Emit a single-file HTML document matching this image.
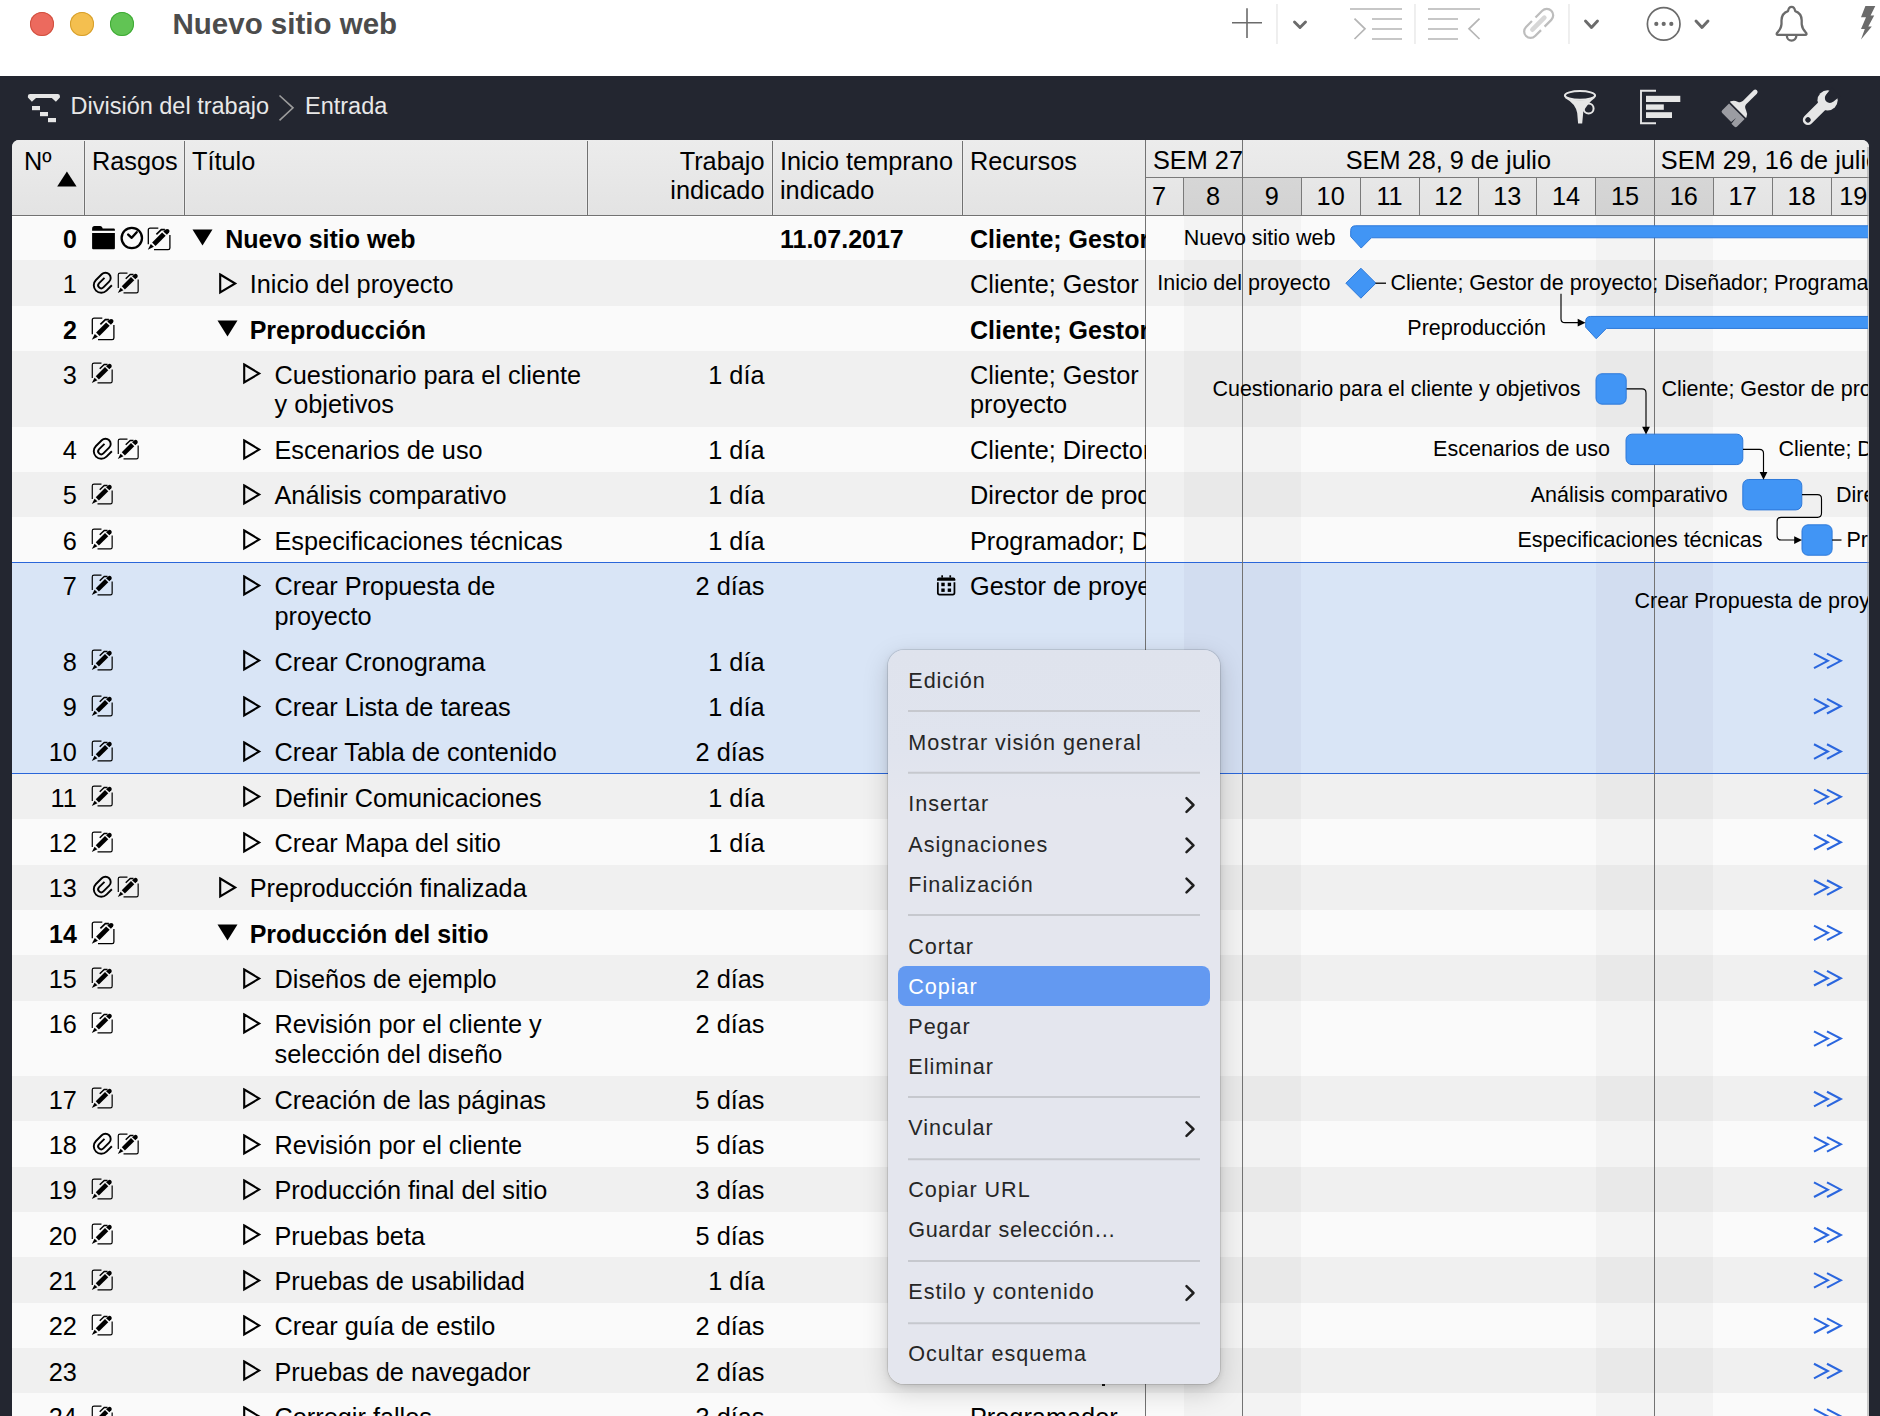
<!DOCTYPE html><html><head><meta charset="utf-8"><title>Nuevo sitio web</title><style>

*{box-sizing:border-box}
html,body{margin:0;padding:0}
body{width:1880px;height:1416px;overflow:hidden;position:relative;background:#232630;font-family:"Liberation Sans",sans-serif;}
.t{position:absolute;white-space:nowrap;}
.ic{position:absolute;overflow:visible}
.abs{position:absolute}

</style></head><body>
<div class="abs" style="left:0;top:0;width:1880px;height:76px;background:#ffffff"></div>
<div class="abs" style="left:30px;top:12px;width:24px;height:24px;border-radius:50%;background:#ec6a5e;box-shadow:inset 0 0 0 1px #d0503f"></div>
<div class="abs" style="left:70px;top:12px;width:24px;height:24px;border-radius:50%;background:#f4bf4f;box-shadow:inset 0 0 0 1px #d69f2c"></div>
<div class="abs" style="left:110px;top:12px;width:24px;height:24px;border-radius:50%;background:#61c454;box-shadow:inset 0 0 0 1px #3faa35"></div>
<div class="t" style="top:5.87px;font-size:29.5px;line-height:35.4px;color:#4c4c4c;font-weight:bold;left:172.50px;">Nuevo sitio web</div>
<svg class="abs" style="left:0;top:0" width="1880" height="76">
<path d="M1232 22.8 H1262 M1247 8.2 V38" stroke="#6b6b6b" stroke-width="1.6" fill="none"/>
<path d="M1277 4 V44 M1415 4 V44 M1569 4 V44" stroke="#e6e6e6" stroke-width="1.3"/>
<path d="M1294.5 22 L1300 27.5 L1305.5 22" stroke="#6b6b6b" stroke-width="2.9" fill="none" stroke-linecap="round" stroke-linejoin="round"/>
<path d="M1585.5 21 L1591.5 27.5 L1597.5 21" stroke="#6b6b6b" stroke-width="2.9" fill="none" stroke-linecap="round" stroke-linejoin="round"/>
<path d="M1696 21 L1702 27.5 L1708 21" stroke="#6b6b6b" stroke-width="2.9" fill="none" stroke-linecap="round" stroke-linejoin="round"/>
<path d="M1350 9 H1402 M1372 19 H1402 M1372 29 H1402 M1372 39 H1402 M1354.5 18.6 L1365 28.8 L1354.5 39" stroke="#b5b5b5" stroke-width="1.7" fill="none"/>
<path d="M1428 9 H1480 M1428 19 H1458 M1428 29 H1458 M1428 39 H1458 M1479.5 18.6 L1469 28.8 L1479.5 39" stroke="#b5b5b5" stroke-width="1.7" fill="none"/>
<g transform="translate(1538.3,23.8) rotate(-45) scale(1.07)"><path d="M2.3 -6 H11.2 A6 6 0 0 1 11.2 6 H2.3 M-2.4 -6 H-10.2 A6 6 0 0 0 -10.2 6 H-2.4" fill="none" stroke="#bdbdbd" stroke-width="2.1"/><path d="M-7.8 0 H8" stroke="#d7d7d7" stroke-width="4.3" stroke-linecap="round"/></g>
<circle cx="1663.7" cy="23.9" r="16.3" fill="none" stroke="#6b6b6b" stroke-width="1.7"/>
<circle cx="1656.3" cy="23.9" r="2.1" fill="#6b6b6b"/><circle cx="1663.7" cy="23.9" r="2.1" fill="#6b6b6b"/><circle cx="1671.3" cy="23.9" r="2.1" fill="#6b6b6b"/>
<path transform="translate(0,0.7)" d="M1778 34.2 H1805.2 Q1807.3 34.2 1806 32 Q1802 28 1801.7 23.5 V19.5 Q1801.5 12.5 1795.2 10.4 Q1794.4 6.2 1791.6 6.2 Q1788.8 6.2 1788 10.4 Q1781.7 12.5 1781.5 19.5 V23.5 Q1781.2 28 1777.2 32 Q1775.9 34.2 1778 34.2 Z" fill="none" stroke="#6b6b6b" stroke-width="2.3" stroke-linejoin="round"/>
<path transform="translate(0,0.7)" d="M1786.9 35.2 A4.7 4.7 0 0 0 1796.3 35.2" fill="none" stroke="#6b6b6b" stroke-width="2.3"/>
<path d="M1865.4 6.1 H1875.3 L1870.6 15.5 H1874.2 L1868.3 26.6 H1871.8 L1861 39.4 L1864.8 28.9 H1861 L1866 17.2 H1861 Z" fill="#6b6b6b"/>
</svg>
<svg class="abs" style="left:0;top:76px" width="1880" height="64">
<path d="M27.9 20.1 Q27.9 17.9 30.1 17.9 H57.7 Q59.9 17.9 59.9 20.1 V21.6 L55.9 25.8 L51.8 21.9 H36 L31.9 25.8 L27.9 21.6 Z" fill="#e6e6e6"/>
<rect x="32" y="30" width="8" height="4.2" fill="#e6e6e6"/><rect x="40" y="36" width="8" height="4.2" fill="#e6e6e6"/><rect x="48" y="42" width="8" height="4.2" fill="#e6e6e6"/>
<path d="M279.5 19.5 L293 31.8 L279.5 44.3" stroke="#9c9c9c" stroke-width="1.6" fill="none"/>
<g transform="translate(0,-76)">
<circle cx="1588.6" cy="108.4" r="5" fill="#232630" stroke="#e6e6e6" stroke-width="2"/>
<path d="M1564.8 96 A15.2 4.3 0 0 0 1595.2 96 L1594.5 98.2 Q1587.8 103 1583.3 111.8 L1582.2 123.6 H1578.1 L1577.2 113 Q1575.5 103.5 1565.3 98.2 Z" fill="#e6e6e6"/>
<ellipse cx="1580" cy="95.4" rx="15.1" ry="4.3" fill="#232630" stroke="#e6e6e6" stroke-width="2"/>
</g>
<path d="M1656 14.8 H1641 V47.2 H1656" fill="none" stroke="#e6e6e6" stroke-width="1.9"/>
<rect x="1646" y="19.8" width="34.3" height="6.2" fill="#e6e6e6"/><rect x="1646" y="28.4" width="17.8" height="5.4" fill="#e6e6e6"/><rect x="1646" y="36.2" width="26" height="5.8" fill="#e6e6e6"/>
<g transform="translate(1737,34) rotate(-45)">
<path d="M8 -2.2 H25.6 A2.3 2.3 0 0 1 25.6 2.5 H8 Z" fill="#e6e6e6"/>
<path d="M0.6 -10.2 Q0.6 -11 1.6 -10.6 Q5 -9 6.3 -5.5 Q7.5 -2.6 10 -2.2 V2.5 Q7.5 2.8 6.3 6.5 Q5 10.5 1.6 11.8 Q0.6 12.2 0.6 11.3 Z" fill="#e6e6e6"/>
<path d="M-1 -10.3 V11.8 H-11.6 Q-13.6 11.8 -13.6 9.8 V5.7 L-6.3 5 L-12.6 4.3 V-8.3 Q-12.6 -10.3 -10.6 -10.3 Z" fill="#9b9ca2"/>
</g>
<g transform="translate(1808,43.9) rotate(-45)">
<path d="M0 -5.2 H27 V5.2 H0 A5.2 5.2 0 0 1 0 -5.2 Z" fill="#e6e6e6"/>
<circle cx="27.7" cy="0" r="10.1" fill="#e6e6e6"/>
<circle cx="30.9" cy="0" r="5" fill="#232630"/>
<path d="M30.9 -5 L40 -6.2 V6.2 L30.9 5 Z" fill="#232630"/>
<circle cx="0" cy="0" r="2.7" fill="#232630"/>
</g>
</svg>
<div class="t" style="top:92.05px;font-size:23.5px;line-height:28.2px;color:#e8e8e8;left:70.50px;">División del trabajo</div>
<div class="t" style="top:92.05px;font-size:23.5px;line-height:28.2px;color:#e8e8e8;left:305.00px;">Entrada</div>
<div class="abs" style="left:12px;top:140px;width:1856.5px;height:1300px;background:#fafafa;border-radius:7px 7px 0 0;overflow:hidden">
</div>
<div class="abs" style="left:12px;top:140px;width:1856.5px;height:75px;background:linear-gradient(#ececec,#e3e3e3);border-radius:7px 7px 0 0"></div>
<div class="abs" style="left:12px;top:215.00px;width:1856.5px;height:45.33px;background:#fafafa"></div>
<div class="abs" style="left:1183.54px;top:215.00px;width:117.71px;height:45.33px;background:rgba(0,0,0,0.028)"></div>
<div class="abs" style="left:1595.54px;top:215.00px;width:117.71px;height:45.33px;background:rgba(0,0,0,0.028)"></div>
<div class="abs" style="left:12px;top:260.33px;width:1856.5px;height:45.33px;background:#f0f0f0"></div>
<div class="abs" style="left:1183.54px;top:260.33px;width:117.71px;height:45.33px;background:rgba(0,0,0,0.028)"></div>
<div class="abs" style="left:1595.54px;top:260.33px;width:117.71px;height:45.33px;background:rgba(0,0,0,0.028)"></div>
<div class="abs" style="left:12px;top:305.67px;width:1856.5px;height:45.33px;background:#fafafa"></div>
<div class="abs" style="left:1183.54px;top:305.67px;width:117.71px;height:45.33px;background:rgba(0,0,0,0.028)"></div>
<div class="abs" style="left:1595.54px;top:305.67px;width:117.71px;height:45.33px;background:rgba(0,0,0,0.028)"></div>
<div class="abs" style="left:12px;top:351.00px;width:1856.5px;height:75.50px;background:#f0f0f0"></div>
<div class="abs" style="left:1183.54px;top:351.00px;width:117.71px;height:75.50px;background:rgba(0,0,0,0.028)"></div>
<div class="abs" style="left:1595.54px;top:351.00px;width:117.71px;height:75.50px;background:rgba(0,0,0,0.028)"></div>
<div class="abs" style="left:12px;top:426.50px;width:1856.5px;height:45.33px;background:#fafafa"></div>
<div class="abs" style="left:1183.54px;top:426.50px;width:117.71px;height:45.33px;background:rgba(0,0,0,0.028)"></div>
<div class="abs" style="left:1595.54px;top:426.50px;width:117.71px;height:45.33px;background:rgba(0,0,0,0.028)"></div>
<div class="abs" style="left:12px;top:471.83px;width:1856.5px;height:45.33px;background:#f0f0f0"></div>
<div class="abs" style="left:1183.54px;top:471.83px;width:117.71px;height:45.33px;background:rgba(0,0,0,0.028)"></div>
<div class="abs" style="left:1595.54px;top:471.83px;width:117.71px;height:45.33px;background:rgba(0,0,0,0.028)"></div>
<div class="abs" style="left:12px;top:517.16px;width:1856.5px;height:45.33px;background:#fafafa"></div>
<div class="abs" style="left:1183.54px;top:517.16px;width:117.71px;height:45.33px;background:rgba(0,0,0,0.028)"></div>
<div class="abs" style="left:1595.54px;top:517.16px;width:117.71px;height:45.33px;background:rgba(0,0,0,0.028)"></div>
<div class="abs" style="left:12px;top:562.50px;width:1856.5px;height:75.50px;background:#d9e5f6"></div>
<div class="abs" style="left:1183.54px;top:562.50px;width:117.71px;height:75.50px;background:rgba(20,40,80,0.035)"></div>
<div class="abs" style="left:1595.54px;top:562.50px;width:117.71px;height:75.50px;background:rgba(20,40,80,0.035)"></div>
<div class="abs" style="left:12px;top:638.00px;width:1856.5px;height:45.33px;background:#d9e5f6"></div>
<div class="abs" style="left:1183.54px;top:638.00px;width:117.71px;height:45.33px;background:rgba(20,40,80,0.035)"></div>
<div class="abs" style="left:1595.54px;top:638.00px;width:117.71px;height:45.33px;background:rgba(20,40,80,0.035)"></div>
<div class="abs" style="left:12px;top:683.33px;width:1856.5px;height:45.33px;background:#d9e5f6"></div>
<div class="abs" style="left:1183.54px;top:683.33px;width:117.71px;height:45.33px;background:rgba(20,40,80,0.035)"></div>
<div class="abs" style="left:1595.54px;top:683.33px;width:117.71px;height:45.33px;background:rgba(20,40,80,0.035)"></div>
<div class="abs" style="left:12px;top:728.66px;width:1856.5px;height:45.33px;background:#d9e5f6"></div>
<div class="abs" style="left:1183.54px;top:728.66px;width:117.71px;height:45.33px;background:rgba(20,40,80,0.035)"></div>
<div class="abs" style="left:1595.54px;top:728.66px;width:117.71px;height:45.33px;background:rgba(20,40,80,0.035)"></div>
<div class="abs" style="left:12px;top:774.00px;width:1856.5px;height:45.33px;background:#f0f0f0"></div>
<div class="abs" style="left:1183.54px;top:774.00px;width:117.71px;height:45.33px;background:rgba(0,0,0,0.028)"></div>
<div class="abs" style="left:1595.54px;top:774.00px;width:117.71px;height:45.33px;background:rgba(0,0,0,0.028)"></div>
<div class="abs" style="left:12px;top:819.33px;width:1856.5px;height:45.33px;background:#fafafa"></div>
<div class="abs" style="left:1183.54px;top:819.33px;width:117.71px;height:45.33px;background:rgba(0,0,0,0.028)"></div>
<div class="abs" style="left:1595.54px;top:819.33px;width:117.71px;height:45.33px;background:rgba(0,0,0,0.028)"></div>
<div class="abs" style="left:12px;top:864.66px;width:1856.5px;height:45.33px;background:#f0f0f0"></div>
<div class="abs" style="left:1183.54px;top:864.66px;width:117.71px;height:45.33px;background:rgba(0,0,0,0.028)"></div>
<div class="abs" style="left:1595.54px;top:864.66px;width:117.71px;height:45.33px;background:rgba(0,0,0,0.028)"></div>
<div class="abs" style="left:12px;top:910.00px;width:1856.5px;height:45.33px;background:#fafafa"></div>
<div class="abs" style="left:1183.54px;top:910.00px;width:117.71px;height:45.33px;background:rgba(0,0,0,0.028)"></div>
<div class="abs" style="left:1595.54px;top:910.00px;width:117.71px;height:45.33px;background:rgba(0,0,0,0.028)"></div>
<div class="abs" style="left:12px;top:955.33px;width:1856.5px;height:45.33px;background:#f0f0f0"></div>
<div class="abs" style="left:1183.54px;top:955.33px;width:117.71px;height:45.33px;background:rgba(0,0,0,0.028)"></div>
<div class="abs" style="left:1595.54px;top:955.33px;width:117.71px;height:45.33px;background:rgba(0,0,0,0.028)"></div>
<div class="abs" style="left:12px;top:1000.66px;width:1856.5px;height:75.50px;background:#fafafa"></div>
<div class="abs" style="left:1183.54px;top:1000.66px;width:117.71px;height:75.50px;background:rgba(0,0,0,0.028)"></div>
<div class="abs" style="left:1595.54px;top:1000.66px;width:117.71px;height:75.50px;background:rgba(0,0,0,0.028)"></div>
<div class="abs" style="left:12px;top:1076.16px;width:1856.5px;height:45.33px;background:#f0f0f0"></div>
<div class="abs" style="left:1183.54px;top:1076.16px;width:117.71px;height:45.33px;background:rgba(0,0,0,0.028)"></div>
<div class="abs" style="left:1595.54px;top:1076.16px;width:117.71px;height:45.33px;background:rgba(0,0,0,0.028)"></div>
<div class="abs" style="left:12px;top:1121.49px;width:1856.5px;height:45.33px;background:#fafafa"></div>
<div class="abs" style="left:1183.54px;top:1121.49px;width:117.71px;height:45.33px;background:rgba(0,0,0,0.028)"></div>
<div class="abs" style="left:1595.54px;top:1121.49px;width:117.71px;height:45.33px;background:rgba(0,0,0,0.028)"></div>
<div class="abs" style="left:12px;top:1166.83px;width:1856.5px;height:45.33px;background:#f0f0f0"></div>
<div class="abs" style="left:1183.54px;top:1166.83px;width:117.71px;height:45.33px;background:rgba(0,0,0,0.028)"></div>
<div class="abs" style="left:1595.54px;top:1166.83px;width:117.71px;height:45.33px;background:rgba(0,0,0,0.028)"></div>
<div class="abs" style="left:12px;top:1212.16px;width:1856.5px;height:45.33px;background:#fafafa"></div>
<div class="abs" style="left:1183.54px;top:1212.16px;width:117.71px;height:45.33px;background:rgba(0,0,0,0.028)"></div>
<div class="abs" style="left:1595.54px;top:1212.16px;width:117.71px;height:45.33px;background:rgba(0,0,0,0.028)"></div>
<div class="abs" style="left:12px;top:1257.49px;width:1856.5px;height:45.33px;background:#f0f0f0"></div>
<div class="abs" style="left:1183.54px;top:1257.49px;width:117.71px;height:45.33px;background:rgba(0,0,0,0.028)"></div>
<div class="abs" style="left:1595.54px;top:1257.49px;width:117.71px;height:45.33px;background:rgba(0,0,0,0.028)"></div>
<div class="abs" style="left:12px;top:1302.83px;width:1856.5px;height:45.33px;background:#fafafa"></div>
<div class="abs" style="left:1183.54px;top:1302.83px;width:117.71px;height:45.33px;background:rgba(0,0,0,0.028)"></div>
<div class="abs" style="left:1595.54px;top:1302.83px;width:117.71px;height:45.33px;background:rgba(0,0,0,0.028)"></div>
<div class="abs" style="left:12px;top:1348.16px;width:1856.5px;height:45.33px;background:#f0f0f0"></div>
<div class="abs" style="left:1183.54px;top:1348.16px;width:117.71px;height:45.33px;background:rgba(0,0,0,0.028)"></div>
<div class="abs" style="left:1595.54px;top:1348.16px;width:117.71px;height:45.33px;background:rgba(0,0,0,0.028)"></div>
<div class="abs" style="left:12px;top:1393.49px;width:1856.5px;height:45.33px;background:#fafafa"></div>
<div class="abs" style="left:1183.54px;top:1393.49px;width:117.71px;height:45.33px;background:rgba(0,0,0,0.028)"></div>
<div class="abs" style="left:1595.54px;top:1393.49px;width:117.71px;height:45.33px;background:rgba(0,0,0,0.028)"></div>
<div class="abs" style="left:1183.54px;top:177.5px;width:117.71px;height:37.5px;background:linear-gradient(#d6d6d6,#d2d2d2)"></div>
<div class="abs" style="left:1595.54px;top:177.5px;width:117.71px;height:37.5px;background:linear-gradient(#d6d6d6,#d2d2d2)"></div>
<div class="abs" style="left:12px;top:562px;width:1856.5px;height:1px;background:#2a66d9"></div>
<div class="abs" style="left:12px;top:773px;width:1856.5px;height:1px;background:#2a66d9"></div>
<svg class="abs" style="left:0;top:0" width="1880" height="1416">
<path d="M84.5 141 V215" stroke="#717171" stroke-width="1"/>
<path d="M83.5 141 V215 M85.5 141 V215" stroke="#efefef" stroke-width="1" opacity="0.7"/>
<path d="M184.5 141 V215" stroke="#717171" stroke-width="1"/>
<path d="M183.5 141 V215 M185.5 141 V215" stroke="#efefef" stroke-width="1" opacity="0.7"/>
<path d="M587.5 141 V215" stroke="#717171" stroke-width="1"/>
<path d="M586.5 141 V215 M588.5 141 V215" stroke="#efefef" stroke-width="1" opacity="0.7"/>
<path d="M772.5 141 V215" stroke="#717171" stroke-width="1"/>
<path d="M771.5 141 V215 M773.5 141 V215" stroke="#efefef" stroke-width="1" opacity="0.7"/>
<path d="M962.5 141 V215" stroke="#717171" stroke-width="1"/>
<path d="M961.5 141 V215 M963.5 141 V215" stroke="#efefef" stroke-width="1" opacity="0.7"/>
<path d="M12 215.5 H1868.5" stroke="#727272" stroke-width="1"/>
<path d="M12 216.5 H1146" stroke="#ffffff" stroke-width="1"/>
<path d="M1145.5 140 V1416" stroke="#737373" stroke-width="1"/>
<path d="M1146 177.5 H1868.5" stroke="#7a7a7a" stroke-width="1"/>
<path d="M1183.5 178 V215" stroke="#7a7a7a" stroke-width="1"/>
<path d="M1242.5 140 V1416" stroke="#737373" stroke-width="1"/>
<path d="M1301.5 178 V215" stroke="#7a7a7a" stroke-width="1"/>
<path d="M1360.5 178 V215" stroke="#7a7a7a" stroke-width="1"/>
<path d="M1419.5 178 V215" stroke="#7a7a7a" stroke-width="1"/>
<path d="M1478.5 178 V215" stroke="#7a7a7a" stroke-width="1"/>
<path d="M1536.5 178 V215" stroke="#7a7a7a" stroke-width="1"/>
<path d="M1595.5 178 V215" stroke="#7a7a7a" stroke-width="1"/>
<path d="M1654.5 140 V1416" stroke="#737373" stroke-width="1"/>
<path d="M1713.5 178 V215" stroke="#7a7a7a" stroke-width="1"/>
<path d="M1772.5 178 V215" stroke="#7a7a7a" stroke-width="1"/>
<path d="M1831.5 178 V215" stroke="#7a7a7a" stroke-width="1"/>
<path d="M1868 147 V1416" stroke="#9a9a9a" stroke-width="1"/>
</svg>
<div class="t" style="top:145.95px;font-size:25.3px;line-height:30.36px;color:#000;left:24.00px;">Nº</div>
<svg class="ic" style="left:57px;top:170.5px" width="20" height="16"><path d="M0.2 15.6 H19.6 L9.9 0.4 Z" fill="#000"/></svg>
<div class="t" style="top:145.95px;font-size:25.3px;line-height:30.36px;color:#000;left:92.00px;">Rasgos</div>
<div class="t" style="top:145.95px;font-size:25.3px;line-height:30.36px;color:#000;left:192.00px;">Título</div>
<div class="t" style="top:145.95px;font-size:25.3px;line-height:30.36px;color:#000;right:1115.50px;text-align:right;">Trabajo</div>
<div class="t" style="top:174.65px;font-size:25.3px;line-height:30.36px;color:#000;right:1115.50px;text-align:right;">indicado</div>
<div class="t" style="top:145.95px;font-size:25.3px;line-height:30.36px;color:#000;left:780.00px;">Inicio temprano</div>
<div class="t" style="top:174.65px;font-size:25.3px;line-height:30.36px;color:#000;left:780.00px;">indicado</div>
<div class="t" style="top:145.95px;font-size:25.3px;line-height:30.36px;color:#000;left:970.00px;">Recursos</div>
<div class="t" style="top:144.95px;font-size:25.3px;line-height:30.36px;color:#000;left:1153.00px;">SEM 27</div>
<div class="t" style="top:144.95px;font-size:25.3px;line-height:30.36px;color:#000;left:1248.40px;width:400px;text-align:center;">SEM 28, 9 de julio</div>
<div class="abs" style="left:1146px;top:140px;width:722.5px;height:75px;overflow:hidden">
</div>
<div class="abs" style="left:1655px;top:140px;width:213px;height:75px;overflow:hidden">
<div class="t" style="top:4.95px;font-size:25.3px;line-height:30.36px;color:#000;left:5.80px;">SEM 29, 16 de julio</div>
</div>
<div class="t" style="top:181.35px;font-size:25.3px;line-height:30.36px;color:#000;left:1182.97px;width:60px;text-align:center;">8</div>
<div class="t" style="top:181.35px;font-size:25.3px;line-height:30.36px;color:#000;left:1241.83px;width:60px;text-align:center;">9</div>
<div class="t" style="top:181.35px;font-size:25.3px;line-height:30.36px;color:#000;left:1300.69px;width:60px;text-align:center;">10</div>
<div class="t" style="top:181.35px;font-size:25.3px;line-height:30.36px;color:#000;left:1359.54px;width:60px;text-align:center;">11</div>
<div class="t" style="top:181.35px;font-size:25.3px;line-height:30.36px;color:#000;left:1418.40px;width:60px;text-align:center;">12</div>
<div class="t" style="top:181.35px;font-size:25.3px;line-height:30.36px;color:#000;left:1477.26px;width:60px;text-align:center;">13</div>
<div class="t" style="top:181.35px;font-size:25.3px;line-height:30.36px;color:#000;left:1536.11px;width:60px;text-align:center;">14</div>
<div class="t" style="top:181.35px;font-size:25.3px;line-height:30.36px;color:#000;left:1594.97px;width:60px;text-align:center;">15</div>
<div class="t" style="top:181.35px;font-size:25.3px;line-height:30.36px;color:#000;left:1653.83px;width:60px;text-align:center;">16</div>
<div class="t" style="top:181.35px;font-size:25.3px;line-height:30.36px;color:#000;left:1712.68px;width:60px;text-align:center;">17</div>
<div class="t" style="top:181.35px;font-size:25.3px;line-height:30.36px;color:#000;left:1771.54px;width:60px;text-align:center;">18</div>
<div class="t" style="top:181.35px;font-size:25.3px;line-height:30.36px;color:#000;left:1152.00px;">7</div>
<div class="abs" style="left:1832px;top:177px;width:36.5px;height:38px;overflow:hidden">
<div class="t" style="top:4.35px;font-size:25.3px;line-height:30.36px;color:#000;left:7.20px;">19</div>
</div>
<div class="t" style="top:223.93px;font-size:25.0px;line-height:30.0px;color:#000;font-weight:bold;right:1803.20px;text-align:right;">0</div>
<svg class="ic" style="left:92px;top:225.57px" width="24" height="24" viewBox="0 0 24 24"><path d="M0.1 2.9 Q0.1 0.1 2.6 0.1 H8.3 Q9.8 0.1 10.3 1.6 L10.7 2.5 H21.8 Q22.9 2.5 22.9 3.6 V4.8 H0.1 Z" fill="#000"/><path d="M0.1 7 H22.9 V22.3 Q22.9 23.3 21.9 23.3 H1.1 Q0.1 23.3 0.1 22.3 Z" fill="#000"/></svg>
<svg class="ic" style="left:119.5px;top:225.87px" width="24" height="24" viewBox="0 0 24 24"><circle cx="11.8" cy="12" r="10.2" fill="none" stroke="#000" stroke-width="2.3"/><path d="M8.2 8.6 L11.7 11.8 L16.7 6.2" fill="none" stroke="#000" stroke-width="2.4" stroke-linecap="round" stroke-linejoin="round"/></svg>
<svg class="ic" style="left:148.4px;top:227.50px" width="24.00" height="25.00" viewBox="0 0 24 25"><path d="M0.3 16.2 V2 Q0.3 0.1 2.2 0.1 H10.3" fill="none" stroke="#000" stroke-width="1.3"/><path d="M6 21.7 H20.1 Q21.9 21.7 21.9 19.9 V7" fill="none" stroke="#000" stroke-width="1.3"/><path d="M4.1 14.5 L14.1 4.4 L17.7 7.8 L7.5 17.9 Z" fill="#000"/><path d="M-0.2 21.7 L2.8 15.9 L5.9 18.8 Z" fill="#000"/><path d="M15.3 3.6 L17.5 1.5 Q19.2 0.3 20.8 1.6 Q22.2 3.1 21 4.6 L18.9 6.8 Z" fill="#000"/><path d="M8.4 6.3 L13.3 1.6 L16.9 1.6" fill="none" stroke="#000" stroke-width="1.6"/></svg>
<svg class="ic" style="left:192px;top:229.17px" width="21" height="16.5"><path d="M0.5 0.5 H20.5 L10.5 16.5 Z" fill="#000"/></svg>
<div class="t" style="top:223.93px;font-size:25.0px;line-height:30.0px;color:#000;font-weight:bold;left:225.30px;">Nuevo sitio web</div>
<div class="t" style="top:223.93px;font-size:25.0px;line-height:30.0px;color:#000;font-weight:bold;left:780.00px;">11.07.2017</div>
<div class="abs" style="left:962.5px;top:215.00px;width:183px;height:45.33px;overflow:hidden">
<div class="t" style="top:8.93px;font-size:25.0px;line-height:30.0px;color:#000;font-weight:bold;left:7.50px;">Cliente; Gestor de proyecto; Diseñador</div>
</div>
<div class="t" style="top:268.98px;font-size:25.3px;line-height:30.36px;color:#000;right:1803.20px;text-align:right;">1</div>
<svg class="ic" style="left:90px;top:267.70px" width="28" height="28" viewBox="0 0 28 28"><g transform="rotate(-45)"><path d="M3.25 27.65 H-4.3 A7.46 7.46 0 0 1 -4.3 12.73 H3.9 A5.23 5.23 0 0 1 3.9 23.19 H-4.3 A3 3 0 0 1 -4.3 17.18 H3.3" fill="none" stroke="#000" stroke-width="1.9"/></g></svg>
<svg class="ic" style="left:118px;top:272.60px" width="22.08" height="23.00" viewBox="0 0 24 25"><path d="M0.3 16.2 V2 Q0.3 0.1 2.2 0.1 H10.3" fill="none" stroke="#000" stroke-width="1.3"/><path d="M6 21.7 H20.1 Q21.9 21.7 21.9 19.9 V7" fill="none" stroke="#000" stroke-width="1.3"/><path d="M4.1 14.5 L14.1 4.4 L17.7 7.8 L7.5 17.9 Z" fill="#000"/><path d="M-0.2 21.7 L2.8 15.9 L5.9 18.8 Z" fill="#000"/><path d="M15.3 3.6 L17.5 1.5 Q19.2 0.3 20.8 1.6 Q22.2 3.1 21 4.6 L18.9 6.8 Z" fill="#000"/><path d="M8.4 6.3 L13.3 1.6 L16.9 1.6" fill="none" stroke="#000" stroke-width="1.6"/></svg>
<svg class="ic" style="left:218.5px;top:272.50px" width="18" height="21"><path d="M1.2 1.5 L16.2 10.5 L1.2 19.5 Z" fill="none" stroke="#000" stroke-width="2.1" stroke-linejoin="miter"/></svg>
<div class="t" style="top:268.98px;font-size:25.3px;line-height:30.36px;color:#000;left:249.70px;">Inicio del proyecto</div>
<div class="abs" style="left:962.5px;top:260.33px;width:183px;height:45.33px;overflow:hidden">
<div class="t" style="top:8.65px;font-size:25.3px;line-height:30.36px;color:#000;left:7.50px;">Cliente; Gestor de proyecto</div>
</div>
<div class="t" style="top:314.60px;font-size:25.0px;line-height:30.0px;color:#000;font-weight:bold;right:1803.20px;text-align:right;">2</div>
<svg class="ic" style="left:92px;top:318.16px" width="24.00" height="25.00" viewBox="0 0 24 25"><path d="M0.3 16.2 V2 Q0.3 0.1 2.2 0.1 H10.3" fill="none" stroke="#000" stroke-width="1.3"/><path d="M6 21.7 H20.1 Q21.9 21.7 21.9 19.9 V7" fill="none" stroke="#000" stroke-width="1.3"/><path d="M4.1 14.5 L14.1 4.4 L17.7 7.8 L7.5 17.9 Z" fill="#000"/><path d="M-0.2 21.7 L2.8 15.9 L5.9 18.8 Z" fill="#000"/><path d="M15.3 3.6 L17.5 1.5 Q19.2 0.3 20.8 1.6 Q22.2 3.1 21 4.6 L18.9 6.8 Z" fill="#000"/><path d="M8.4 6.3 L13.3 1.6 L16.9 1.6" fill="none" stroke="#000" stroke-width="1.6"/></svg>
<svg class="ic" style="left:217px;top:319.83px" width="21" height="16.5"><path d="M0.5 0.5 H20.5 L10.5 16.5 Z" fill="#000"/></svg>
<div class="t" style="top:314.60px;font-size:25.0px;line-height:30.0px;color:#000;font-weight:bold;left:249.70px;">Preproducción</div>
<div class="abs" style="left:962.5px;top:305.67px;width:183px;height:45.33px;overflow:hidden">
<div class="t" style="top:8.93px;font-size:25.0px;line-height:30.0px;color:#000;font-weight:bold;left:7.50px;">Cliente; Gestor de proyecto</div>
</div>
<div class="t" style="top:359.65px;font-size:25.3px;line-height:30.36px;color:#000;right:1803.20px;text-align:right;">3</div>
<svg class="ic" style="left:92px;top:363.27px" width="22.08" height="23.00" viewBox="0 0 24 25"><path d="M0.3 16.2 V2 Q0.3 0.1 2.2 0.1 H10.3" fill="none" stroke="#000" stroke-width="1.3"/><path d="M6 21.7 H20.1 Q21.9 21.7 21.9 19.9 V7" fill="none" stroke="#000" stroke-width="1.3"/><path d="M4.1 14.5 L14.1 4.4 L17.7 7.8 L7.5 17.9 Z" fill="#000"/><path d="M-0.2 21.7 L2.8 15.9 L5.9 18.8 Z" fill="#000"/><path d="M15.3 3.6 L17.5 1.5 Q19.2 0.3 20.8 1.6 Q22.2 3.1 21 4.6 L18.9 6.8 Z" fill="#000"/><path d="M8.4 6.3 L13.3 1.6 L16.9 1.6" fill="none" stroke="#000" stroke-width="1.6"/></svg>
<svg class="ic" style="left:243.3px;top:363.17px" width="18" height="21"><path d="M1.2 1.5 L16.2 10.5 L1.2 19.5 Z" fill="none" stroke="#000" stroke-width="2.1" stroke-linejoin="miter"/></svg>
<div class="t" style="top:359.65px;font-size:25.3px;line-height:30.36px;color:#000;left:274.50px;">Cuestionario para el cliente</div>
<div class="t" style="top:389.25px;font-size:25.3px;line-height:30.36px;color:#000;left:274.50px;">y objetivos</div>
<div class="t" style="top:359.65px;font-size:25.3px;line-height:30.36px;color:#000;right:1115.50px;text-align:right;">1 día</div>
<div class="abs" style="left:962.5px;top:351.00px;width:183px;height:75.50px;overflow:hidden">
<div class="t" style="top:8.65px;font-size:25.3px;line-height:30.36px;color:#000;left:7.50px;">Cliente; Gestor de</div>
<div class="t" style="top:38.25px;font-size:25.3px;line-height:30.36px;color:#000;left:7.50px;">proyecto</div>
</div>
<div class="t" style="top:435.15px;font-size:25.3px;line-height:30.36px;color:#000;right:1803.20px;text-align:right;">4</div>
<svg class="ic" style="left:90px;top:433.87px" width="28" height="28" viewBox="0 0 28 28"><g transform="rotate(-45)"><path d="M3.25 27.65 H-4.3 A7.46 7.46 0 0 1 -4.3 12.73 H3.9 A5.23 5.23 0 0 1 3.9 23.19 H-4.3 A3 3 0 0 1 -4.3 17.18 H3.3" fill="none" stroke="#000" stroke-width="1.9"/></g></svg>
<svg class="ic" style="left:118px;top:438.77px" width="22.08" height="23.00" viewBox="0 0 24 25"><path d="M0.3 16.2 V2 Q0.3 0.1 2.2 0.1 H10.3" fill="none" stroke="#000" stroke-width="1.3"/><path d="M6 21.7 H20.1 Q21.9 21.7 21.9 19.9 V7" fill="none" stroke="#000" stroke-width="1.3"/><path d="M4.1 14.5 L14.1 4.4 L17.7 7.8 L7.5 17.9 Z" fill="#000"/><path d="M-0.2 21.7 L2.8 15.9 L5.9 18.8 Z" fill="#000"/><path d="M15.3 3.6 L17.5 1.5 Q19.2 0.3 20.8 1.6 Q22.2 3.1 21 4.6 L18.9 6.8 Z" fill="#000"/><path d="M8.4 6.3 L13.3 1.6 L16.9 1.6" fill="none" stroke="#000" stroke-width="1.6"/></svg>
<svg class="ic" style="left:243.3px;top:438.67px" width="18" height="21"><path d="M1.2 1.5 L16.2 10.5 L1.2 19.5 Z" fill="none" stroke="#000" stroke-width="2.1" stroke-linejoin="miter"/></svg>
<div class="t" style="top:435.15px;font-size:25.3px;line-height:30.36px;color:#000;left:274.50px;">Escenarios de uso</div>
<div class="t" style="top:435.15px;font-size:25.3px;line-height:30.36px;color:#000;right:1115.50px;text-align:right;">1 día</div>
<div class="abs" style="left:962.5px;top:426.50px;width:183px;height:45.33px;overflow:hidden">
<div class="t" style="top:8.65px;font-size:25.3px;line-height:30.36px;color:#000;left:7.50px;">Cliente; Director de producción</div>
</div>
<div class="t" style="top:480.48px;font-size:25.3px;line-height:30.36px;color:#000;right:1803.20px;text-align:right;">5</div>
<svg class="ic" style="left:92px;top:484.10px" width="22.08" height="23.00" viewBox="0 0 24 25"><path d="M0.3 16.2 V2 Q0.3 0.1 2.2 0.1 H10.3" fill="none" stroke="#000" stroke-width="1.3"/><path d="M6 21.7 H20.1 Q21.9 21.7 21.9 19.9 V7" fill="none" stroke="#000" stroke-width="1.3"/><path d="M4.1 14.5 L14.1 4.4 L17.7 7.8 L7.5 17.9 Z" fill="#000"/><path d="M-0.2 21.7 L2.8 15.9 L5.9 18.8 Z" fill="#000"/><path d="M15.3 3.6 L17.5 1.5 Q19.2 0.3 20.8 1.6 Q22.2 3.1 21 4.6 L18.9 6.8 Z" fill="#000"/><path d="M8.4 6.3 L13.3 1.6 L16.9 1.6" fill="none" stroke="#000" stroke-width="1.6"/></svg>
<svg class="ic" style="left:243.3px;top:484.00px" width="18" height="21"><path d="M1.2 1.5 L16.2 10.5 L1.2 19.5 Z" fill="none" stroke="#000" stroke-width="2.1" stroke-linejoin="miter"/></svg>
<div class="t" style="top:480.48px;font-size:25.3px;line-height:30.36px;color:#000;left:274.50px;">Análisis comparativo</div>
<div class="t" style="top:480.48px;font-size:25.3px;line-height:30.36px;color:#000;right:1115.50px;text-align:right;">1 día</div>
<div class="abs" style="left:962.5px;top:471.83px;width:183px;height:45.33px;overflow:hidden">
<div class="t" style="top:8.65px;font-size:25.3px;line-height:30.36px;color:#000;left:7.50px;">Director de producción</div>
</div>
<div class="t" style="top:525.81px;font-size:25.3px;line-height:30.36px;color:#000;right:1803.20px;text-align:right;">6</div>
<svg class="ic" style="left:92px;top:529.43px" width="22.08" height="23.00" viewBox="0 0 24 25"><path d="M0.3 16.2 V2 Q0.3 0.1 2.2 0.1 H10.3" fill="none" stroke="#000" stroke-width="1.3"/><path d="M6 21.7 H20.1 Q21.9 21.7 21.9 19.9 V7" fill="none" stroke="#000" stroke-width="1.3"/><path d="M4.1 14.5 L14.1 4.4 L17.7 7.8 L7.5 17.9 Z" fill="#000"/><path d="M-0.2 21.7 L2.8 15.9 L5.9 18.8 Z" fill="#000"/><path d="M15.3 3.6 L17.5 1.5 Q19.2 0.3 20.8 1.6 Q22.2 3.1 21 4.6 L18.9 6.8 Z" fill="#000"/><path d="M8.4 6.3 L13.3 1.6 L16.9 1.6" fill="none" stroke="#000" stroke-width="1.6"/></svg>
<svg class="ic" style="left:243.3px;top:529.33px" width="18" height="21"><path d="M1.2 1.5 L16.2 10.5 L1.2 19.5 Z" fill="none" stroke="#000" stroke-width="2.1" stroke-linejoin="miter"/></svg>
<div class="t" style="top:525.81px;font-size:25.3px;line-height:30.36px;color:#000;left:274.50px;">Especificaciones técnicas</div>
<div class="t" style="top:525.81px;font-size:25.3px;line-height:30.36px;color:#000;right:1115.50px;text-align:right;">1 día</div>
<div class="abs" style="left:962.5px;top:517.16px;width:183px;height:45.33px;overflow:hidden">
<div class="t" style="top:8.65px;font-size:25.3px;line-height:30.36px;color:#000;left:7.50px;">Programador; Diseñador</div>
</div>
<div class="t" style="top:571.15px;font-size:25.3px;line-height:30.36px;color:#000;right:1803.20px;text-align:right;">7</div>
<svg class="ic" style="left:92px;top:574.76px" width="22.08" height="23.00" viewBox="0 0 24 25"><path d="M0.3 16.2 V2 Q0.3 0.1 2.2 0.1 H10.3" fill="none" stroke="#000" stroke-width="1.3"/><path d="M6 21.7 H20.1 Q21.9 21.7 21.9 19.9 V7" fill="none" stroke="#000" stroke-width="1.3"/><path d="M4.1 14.5 L14.1 4.4 L17.7 7.8 L7.5 17.9 Z" fill="#000"/><path d="M-0.2 21.7 L2.8 15.9 L5.9 18.8 Z" fill="#000"/><path d="M15.3 3.6 L17.5 1.5 Q19.2 0.3 20.8 1.6 Q22.2 3.1 21 4.6 L18.9 6.8 Z" fill="#000"/><path d="M8.4 6.3 L13.3 1.6 L16.9 1.6" fill="none" stroke="#000" stroke-width="1.6"/></svg>
<svg class="ic" style="left:243.3px;top:574.66px" width="18" height="21"><path d="M1.2 1.5 L16.2 10.5 L1.2 19.5 Z" fill="none" stroke="#000" stroke-width="2.1" stroke-linejoin="miter"/></svg>
<div class="t" style="top:571.15px;font-size:25.3px;line-height:30.36px;color:#000;left:274.50px;">Crear Propuesta de</div>
<div class="t" style="top:600.75px;font-size:25.3px;line-height:30.36px;color:#000;left:274.50px;">proyecto</div>
<div class="t" style="top:571.15px;font-size:25.3px;line-height:30.36px;color:#000;right:1115.50px;text-align:right;">2 días</div>
<svg class="ic" style="left:937px;top:573.66px" width="19" height="23" viewBox="0 0 19 23"><path d="M0 5.2 Q0 3.4 1.8 3.4 H16.5 Q18.3 3.4 18.3 5.2 V6.65 H0 Z" fill="#000"/><rect x="4.3" y="1.3" width="1.7" height="2.3" fill="#000"/><rect x="12.4" y="1.3" width="1.7" height="2.3" fill="#000"/><path d="M0.85 8.3 V19 Q0.85 20.6 2.6 20.6 H15.7 Q17.45 20.6 17.45 19 V8.3" fill="none" stroke="#000" stroke-width="1.75"/><rect x="4.3" y="8.7" width="3.4" height="3.5" fill="#000"/><rect x="10.7" y="8.7" width="3.4" height="3.5" fill="#000"/><rect x="4.3" y="14.5" width="3.4" height="3.4" fill="#000"/><rect x="10.7" y="14.5" width="3.4" height="3.4" fill="#000"/></svg>
<div class="abs" style="left:962.5px;top:562.50px;width:183px;height:75.50px;overflow:hidden">
<div class="t" style="top:8.65px;font-size:25.3px;line-height:30.36px;color:#000;left:7.50px;">Gestor de proyecto</div>
</div>
<div class="t" style="top:646.65px;font-size:25.3px;line-height:30.36px;color:#000;right:1803.20px;text-align:right;">8</div>
<svg class="ic" style="left:92px;top:650.26px" width="22.08" height="23.00" viewBox="0 0 24 25"><path d="M0.3 16.2 V2 Q0.3 0.1 2.2 0.1 H10.3" fill="none" stroke="#000" stroke-width="1.3"/><path d="M6 21.7 H20.1 Q21.9 21.7 21.9 19.9 V7" fill="none" stroke="#000" stroke-width="1.3"/><path d="M4.1 14.5 L14.1 4.4 L17.7 7.8 L7.5 17.9 Z" fill="#000"/><path d="M-0.2 21.7 L2.8 15.9 L5.9 18.8 Z" fill="#000"/><path d="M15.3 3.6 L17.5 1.5 Q19.2 0.3 20.8 1.6 Q22.2 3.1 21 4.6 L18.9 6.8 Z" fill="#000"/><path d="M8.4 6.3 L13.3 1.6 L16.9 1.6" fill="none" stroke="#000" stroke-width="1.6"/></svg>
<svg class="ic" style="left:243.3px;top:650.16px" width="18" height="21"><path d="M1.2 1.5 L16.2 10.5 L1.2 19.5 Z" fill="none" stroke="#000" stroke-width="2.1" stroke-linejoin="miter"/></svg>
<div class="t" style="top:646.65px;font-size:25.3px;line-height:30.36px;color:#000;left:274.50px;">Crear Cronograma</div>
<div class="t" style="top:646.65px;font-size:25.3px;line-height:30.36px;color:#000;right:1115.50px;text-align:right;">1 día</div>
<div class="t" style="top:691.98px;font-size:25.3px;line-height:30.36px;color:#000;right:1803.20px;text-align:right;">9</div>
<svg class="ic" style="left:92px;top:695.60px" width="22.08" height="23.00" viewBox="0 0 24 25"><path d="M0.3 16.2 V2 Q0.3 0.1 2.2 0.1 H10.3" fill="none" stroke="#000" stroke-width="1.3"/><path d="M6 21.7 H20.1 Q21.9 21.7 21.9 19.9 V7" fill="none" stroke="#000" stroke-width="1.3"/><path d="M4.1 14.5 L14.1 4.4 L17.7 7.8 L7.5 17.9 Z" fill="#000"/><path d="M-0.2 21.7 L2.8 15.9 L5.9 18.8 Z" fill="#000"/><path d="M15.3 3.6 L17.5 1.5 Q19.2 0.3 20.8 1.6 Q22.2 3.1 21 4.6 L18.9 6.8 Z" fill="#000"/><path d="M8.4 6.3 L13.3 1.6 L16.9 1.6" fill="none" stroke="#000" stroke-width="1.6"/></svg>
<svg class="ic" style="left:243.3px;top:695.50px" width="18" height="21"><path d="M1.2 1.5 L16.2 10.5 L1.2 19.5 Z" fill="none" stroke="#000" stroke-width="2.1" stroke-linejoin="miter"/></svg>
<div class="t" style="top:691.98px;font-size:25.3px;line-height:30.36px;color:#000;left:274.50px;">Crear Lista de tareas</div>
<div class="t" style="top:691.98px;font-size:25.3px;line-height:30.36px;color:#000;right:1115.50px;text-align:right;">1 día</div>
<div class="t" style="top:737.31px;font-size:25.3px;line-height:30.36px;color:#000;right:1803.20px;text-align:right;">10</div>
<svg class="ic" style="left:92px;top:740.93px" width="22.08" height="23.00" viewBox="0 0 24 25"><path d="M0.3 16.2 V2 Q0.3 0.1 2.2 0.1 H10.3" fill="none" stroke="#000" stroke-width="1.3"/><path d="M6 21.7 H20.1 Q21.9 21.7 21.9 19.9 V7" fill="none" stroke="#000" stroke-width="1.3"/><path d="M4.1 14.5 L14.1 4.4 L17.7 7.8 L7.5 17.9 Z" fill="#000"/><path d="M-0.2 21.7 L2.8 15.9 L5.9 18.8 Z" fill="#000"/><path d="M15.3 3.6 L17.5 1.5 Q19.2 0.3 20.8 1.6 Q22.2 3.1 21 4.6 L18.9 6.8 Z" fill="#000"/><path d="M8.4 6.3 L13.3 1.6 L16.9 1.6" fill="none" stroke="#000" stroke-width="1.6"/></svg>
<svg class="ic" style="left:243.3px;top:740.83px" width="18" height="21"><path d="M1.2 1.5 L16.2 10.5 L1.2 19.5 Z" fill="none" stroke="#000" stroke-width="2.1" stroke-linejoin="miter"/></svg>
<div class="t" style="top:737.31px;font-size:25.3px;line-height:30.36px;color:#000;left:274.50px;">Crear Tabla de contenido</div>
<div class="t" style="top:737.31px;font-size:25.3px;line-height:30.36px;color:#000;right:1115.50px;text-align:right;">2 días</div>
<div class="t" style="top:782.65px;font-size:25.3px;line-height:30.36px;color:#000;right:1803.20px;text-align:right;">11</div>
<svg class="ic" style="left:92px;top:786.26px" width="22.08" height="23.00" viewBox="0 0 24 25"><path d="M0.3 16.2 V2 Q0.3 0.1 2.2 0.1 H10.3" fill="none" stroke="#000" stroke-width="1.3"/><path d="M6 21.7 H20.1 Q21.9 21.7 21.9 19.9 V7" fill="none" stroke="#000" stroke-width="1.3"/><path d="M4.1 14.5 L14.1 4.4 L17.7 7.8 L7.5 17.9 Z" fill="#000"/><path d="M-0.2 21.7 L2.8 15.9 L5.9 18.8 Z" fill="#000"/><path d="M15.3 3.6 L17.5 1.5 Q19.2 0.3 20.8 1.6 Q22.2 3.1 21 4.6 L18.9 6.8 Z" fill="#000"/><path d="M8.4 6.3 L13.3 1.6 L16.9 1.6" fill="none" stroke="#000" stroke-width="1.6"/></svg>
<svg class="ic" style="left:243.3px;top:786.16px" width="18" height="21"><path d="M1.2 1.5 L16.2 10.5 L1.2 19.5 Z" fill="none" stroke="#000" stroke-width="2.1" stroke-linejoin="miter"/></svg>
<div class="t" style="top:782.65px;font-size:25.3px;line-height:30.36px;color:#000;left:274.50px;">Definir Comunicaciones</div>
<div class="t" style="top:782.65px;font-size:25.3px;line-height:30.36px;color:#000;right:1115.50px;text-align:right;">1 día</div>
<div class="t" style="top:827.98px;font-size:25.3px;line-height:30.36px;color:#000;right:1803.20px;text-align:right;">12</div>
<svg class="ic" style="left:92px;top:831.60px" width="22.08" height="23.00" viewBox="0 0 24 25"><path d="M0.3 16.2 V2 Q0.3 0.1 2.2 0.1 H10.3" fill="none" stroke="#000" stroke-width="1.3"/><path d="M6 21.7 H20.1 Q21.9 21.7 21.9 19.9 V7" fill="none" stroke="#000" stroke-width="1.3"/><path d="M4.1 14.5 L14.1 4.4 L17.7 7.8 L7.5 17.9 Z" fill="#000"/><path d="M-0.2 21.7 L2.8 15.9 L5.9 18.8 Z" fill="#000"/><path d="M15.3 3.6 L17.5 1.5 Q19.2 0.3 20.8 1.6 Q22.2 3.1 21 4.6 L18.9 6.8 Z" fill="#000"/><path d="M8.4 6.3 L13.3 1.6 L16.9 1.6" fill="none" stroke="#000" stroke-width="1.6"/></svg>
<svg class="ic" style="left:243.3px;top:831.50px" width="18" height="21"><path d="M1.2 1.5 L16.2 10.5 L1.2 19.5 Z" fill="none" stroke="#000" stroke-width="2.1" stroke-linejoin="miter"/></svg>
<div class="t" style="top:827.98px;font-size:25.3px;line-height:30.36px;color:#000;left:274.50px;">Crear Mapa del sitio</div>
<div class="t" style="top:827.98px;font-size:25.3px;line-height:30.36px;color:#000;right:1115.50px;text-align:right;">1 día</div>
<div class="t" style="top:873.31px;font-size:25.3px;line-height:30.36px;color:#000;right:1803.20px;text-align:right;">13</div>
<svg class="ic" style="left:90px;top:872.03px" width="28" height="28" viewBox="0 0 28 28"><g transform="rotate(-45)"><path d="M3.25 27.65 H-4.3 A7.46 7.46 0 0 1 -4.3 12.73 H3.9 A5.23 5.23 0 0 1 3.9 23.19 H-4.3 A3 3 0 0 1 -4.3 17.18 H3.3" fill="none" stroke="#000" stroke-width="1.9"/></g></svg>
<svg class="ic" style="left:118px;top:876.93px" width="22.08" height="23.00" viewBox="0 0 24 25"><path d="M0.3 16.2 V2 Q0.3 0.1 2.2 0.1 H10.3" fill="none" stroke="#000" stroke-width="1.3"/><path d="M6 21.7 H20.1 Q21.9 21.7 21.9 19.9 V7" fill="none" stroke="#000" stroke-width="1.3"/><path d="M4.1 14.5 L14.1 4.4 L17.7 7.8 L7.5 17.9 Z" fill="#000"/><path d="M-0.2 21.7 L2.8 15.9 L5.9 18.8 Z" fill="#000"/><path d="M15.3 3.6 L17.5 1.5 Q19.2 0.3 20.8 1.6 Q22.2 3.1 21 4.6 L18.9 6.8 Z" fill="#000"/><path d="M8.4 6.3 L13.3 1.6 L16.9 1.6" fill="none" stroke="#000" stroke-width="1.6"/></svg>
<svg class="ic" style="left:218.5px;top:876.83px" width="18" height="21"><path d="M1.2 1.5 L16.2 10.5 L1.2 19.5 Z" fill="none" stroke="#000" stroke-width="2.1" stroke-linejoin="miter"/></svg>
<div class="t" style="top:873.31px;font-size:25.3px;line-height:30.36px;color:#000;left:249.70px;">Preproducción finalizada</div>
<div class="t" style="top:918.93px;font-size:25.0px;line-height:30.0px;color:#000;font-weight:bold;right:1803.20px;text-align:right;">14</div>
<svg class="ic" style="left:92px;top:922.49px" width="24.00" height="25.00" viewBox="0 0 24 25"><path d="M0.3 16.2 V2 Q0.3 0.1 2.2 0.1 H10.3" fill="none" stroke="#000" stroke-width="1.3"/><path d="M6 21.7 H20.1 Q21.9 21.7 21.9 19.9 V7" fill="none" stroke="#000" stroke-width="1.3"/><path d="M4.1 14.5 L14.1 4.4 L17.7 7.8 L7.5 17.9 Z" fill="#000"/><path d="M-0.2 21.7 L2.8 15.9 L5.9 18.8 Z" fill="#000"/><path d="M15.3 3.6 L17.5 1.5 Q19.2 0.3 20.8 1.6 Q22.2 3.1 21 4.6 L18.9 6.8 Z" fill="#000"/><path d="M8.4 6.3 L13.3 1.6 L16.9 1.6" fill="none" stroke="#000" stroke-width="1.6"/></svg>
<svg class="ic" style="left:217px;top:924.16px" width="21" height="16.5"><path d="M0.5 0.5 H20.5 L10.5 16.5 Z" fill="#000"/></svg>
<div class="t" style="top:918.93px;font-size:25.0px;line-height:30.0px;color:#000;font-weight:bold;left:249.70px;">Producción del sitio</div>
<div class="t" style="top:963.98px;font-size:25.3px;line-height:30.36px;color:#000;right:1803.20px;text-align:right;">15</div>
<svg class="ic" style="left:92px;top:967.60px" width="22.08" height="23.00" viewBox="0 0 24 25"><path d="M0.3 16.2 V2 Q0.3 0.1 2.2 0.1 H10.3" fill="none" stroke="#000" stroke-width="1.3"/><path d="M6 21.7 H20.1 Q21.9 21.7 21.9 19.9 V7" fill="none" stroke="#000" stroke-width="1.3"/><path d="M4.1 14.5 L14.1 4.4 L17.7 7.8 L7.5 17.9 Z" fill="#000"/><path d="M-0.2 21.7 L2.8 15.9 L5.9 18.8 Z" fill="#000"/><path d="M15.3 3.6 L17.5 1.5 Q19.2 0.3 20.8 1.6 Q22.2 3.1 21 4.6 L18.9 6.8 Z" fill="#000"/><path d="M8.4 6.3 L13.3 1.6 L16.9 1.6" fill="none" stroke="#000" stroke-width="1.6"/></svg>
<svg class="ic" style="left:243.3px;top:967.50px" width="18" height="21"><path d="M1.2 1.5 L16.2 10.5 L1.2 19.5 Z" fill="none" stroke="#000" stroke-width="2.1" stroke-linejoin="miter"/></svg>
<div class="t" style="top:963.98px;font-size:25.3px;line-height:30.36px;color:#000;left:274.50px;">Diseños de ejemplo</div>
<div class="t" style="top:963.98px;font-size:25.3px;line-height:30.36px;color:#000;right:1115.50px;text-align:right;">2 días</div>
<div class="t" style="top:1009.31px;font-size:25.3px;line-height:30.36px;color:#000;right:1803.20px;text-align:right;">16</div>
<svg class="ic" style="left:92px;top:1012.93px" width="22.08" height="23.00" viewBox="0 0 24 25"><path d="M0.3 16.2 V2 Q0.3 0.1 2.2 0.1 H10.3" fill="none" stroke="#000" stroke-width="1.3"/><path d="M6 21.7 H20.1 Q21.9 21.7 21.9 19.9 V7" fill="none" stroke="#000" stroke-width="1.3"/><path d="M4.1 14.5 L14.1 4.4 L17.7 7.8 L7.5 17.9 Z" fill="#000"/><path d="M-0.2 21.7 L2.8 15.9 L5.9 18.8 Z" fill="#000"/><path d="M15.3 3.6 L17.5 1.5 Q19.2 0.3 20.8 1.6 Q22.2 3.1 21 4.6 L18.9 6.8 Z" fill="#000"/><path d="M8.4 6.3 L13.3 1.6 L16.9 1.6" fill="none" stroke="#000" stroke-width="1.6"/></svg>
<svg class="ic" style="left:243.3px;top:1012.83px" width="18" height="21"><path d="M1.2 1.5 L16.2 10.5 L1.2 19.5 Z" fill="none" stroke="#000" stroke-width="2.1" stroke-linejoin="miter"/></svg>
<div class="t" style="top:1009.31px;font-size:25.3px;line-height:30.36px;color:#000;left:274.50px;">Revisión por el cliente y</div>
<div class="t" style="top:1038.91px;font-size:25.3px;line-height:30.36px;color:#000;left:274.50px;">selección del diseño</div>
<div class="t" style="top:1009.31px;font-size:25.3px;line-height:30.36px;color:#000;right:1115.50px;text-align:right;">2 días</div>
<div class="t" style="top:1084.81px;font-size:25.3px;line-height:30.36px;color:#000;right:1803.20px;text-align:right;">17</div>
<svg class="ic" style="left:92px;top:1088.43px" width="22.08" height="23.00" viewBox="0 0 24 25"><path d="M0.3 16.2 V2 Q0.3 0.1 2.2 0.1 H10.3" fill="none" stroke="#000" stroke-width="1.3"/><path d="M6 21.7 H20.1 Q21.9 21.7 21.9 19.9 V7" fill="none" stroke="#000" stroke-width="1.3"/><path d="M4.1 14.5 L14.1 4.4 L17.7 7.8 L7.5 17.9 Z" fill="#000"/><path d="M-0.2 21.7 L2.8 15.9 L5.9 18.8 Z" fill="#000"/><path d="M15.3 3.6 L17.5 1.5 Q19.2 0.3 20.8 1.6 Q22.2 3.1 21 4.6 L18.9 6.8 Z" fill="#000"/><path d="M8.4 6.3 L13.3 1.6 L16.9 1.6" fill="none" stroke="#000" stroke-width="1.6"/></svg>
<svg class="ic" style="left:243.3px;top:1088.33px" width="18" height="21"><path d="M1.2 1.5 L16.2 10.5 L1.2 19.5 Z" fill="none" stroke="#000" stroke-width="2.1" stroke-linejoin="miter"/></svg>
<div class="t" style="top:1084.81px;font-size:25.3px;line-height:30.36px;color:#000;left:274.50px;">Creación de las páginas</div>
<div class="t" style="top:1084.81px;font-size:25.3px;line-height:30.36px;color:#000;right:1115.50px;text-align:right;">5 días</div>
<div class="t" style="top:1130.14px;font-size:25.3px;line-height:30.36px;color:#000;right:1803.20px;text-align:right;">18</div>
<svg class="ic" style="left:90px;top:1128.86px" width="28" height="28" viewBox="0 0 28 28"><g transform="rotate(-45)"><path d="M3.25 27.65 H-4.3 A7.46 7.46 0 0 1 -4.3 12.73 H3.9 A5.23 5.23 0 0 1 3.9 23.19 H-4.3 A3 3 0 0 1 -4.3 17.18 H3.3" fill="none" stroke="#000" stroke-width="1.9"/></g></svg>
<svg class="ic" style="left:118px;top:1133.76px" width="22.08" height="23.00" viewBox="0 0 24 25"><path d="M0.3 16.2 V2 Q0.3 0.1 2.2 0.1 H10.3" fill="none" stroke="#000" stroke-width="1.3"/><path d="M6 21.7 H20.1 Q21.9 21.7 21.9 19.9 V7" fill="none" stroke="#000" stroke-width="1.3"/><path d="M4.1 14.5 L14.1 4.4 L17.7 7.8 L7.5 17.9 Z" fill="#000"/><path d="M-0.2 21.7 L2.8 15.9 L5.9 18.8 Z" fill="#000"/><path d="M15.3 3.6 L17.5 1.5 Q19.2 0.3 20.8 1.6 Q22.2 3.1 21 4.6 L18.9 6.8 Z" fill="#000"/><path d="M8.4 6.3 L13.3 1.6 L16.9 1.6" fill="none" stroke="#000" stroke-width="1.6"/></svg>
<svg class="ic" style="left:243.3px;top:1133.66px" width="18" height="21"><path d="M1.2 1.5 L16.2 10.5 L1.2 19.5 Z" fill="none" stroke="#000" stroke-width="2.1" stroke-linejoin="miter"/></svg>
<div class="t" style="top:1130.14px;font-size:25.3px;line-height:30.36px;color:#000;left:274.50px;">Revisión por el cliente</div>
<div class="t" style="top:1130.14px;font-size:25.3px;line-height:30.36px;color:#000;right:1115.50px;text-align:right;">5 días</div>
<div class="t" style="top:1175.48px;font-size:25.3px;line-height:30.36px;color:#000;right:1803.20px;text-align:right;">19</div>
<svg class="ic" style="left:92px;top:1179.09px" width="22.08" height="23.00" viewBox="0 0 24 25"><path d="M0.3 16.2 V2 Q0.3 0.1 2.2 0.1 H10.3" fill="none" stroke="#000" stroke-width="1.3"/><path d="M6 21.7 H20.1 Q21.9 21.7 21.9 19.9 V7" fill="none" stroke="#000" stroke-width="1.3"/><path d="M4.1 14.5 L14.1 4.4 L17.7 7.8 L7.5 17.9 Z" fill="#000"/><path d="M-0.2 21.7 L2.8 15.9 L5.9 18.8 Z" fill="#000"/><path d="M15.3 3.6 L17.5 1.5 Q19.2 0.3 20.8 1.6 Q22.2 3.1 21 4.6 L18.9 6.8 Z" fill="#000"/><path d="M8.4 6.3 L13.3 1.6 L16.9 1.6" fill="none" stroke="#000" stroke-width="1.6"/></svg>
<svg class="ic" style="left:243.3px;top:1178.99px" width="18" height="21"><path d="M1.2 1.5 L16.2 10.5 L1.2 19.5 Z" fill="none" stroke="#000" stroke-width="2.1" stroke-linejoin="miter"/></svg>
<div class="t" style="top:1175.48px;font-size:25.3px;line-height:30.36px;color:#000;left:274.50px;">Producción final del sitio</div>
<div class="t" style="top:1175.48px;font-size:25.3px;line-height:30.36px;color:#000;right:1115.50px;text-align:right;">3 días</div>
<div class="t" style="top:1220.81px;font-size:25.3px;line-height:30.36px;color:#000;right:1803.20px;text-align:right;">20</div>
<svg class="ic" style="left:92px;top:1224.43px" width="22.08" height="23.00" viewBox="0 0 24 25"><path d="M0.3 16.2 V2 Q0.3 0.1 2.2 0.1 H10.3" fill="none" stroke="#000" stroke-width="1.3"/><path d="M6 21.7 H20.1 Q21.9 21.7 21.9 19.9 V7" fill="none" stroke="#000" stroke-width="1.3"/><path d="M4.1 14.5 L14.1 4.4 L17.7 7.8 L7.5 17.9 Z" fill="#000"/><path d="M-0.2 21.7 L2.8 15.9 L5.9 18.8 Z" fill="#000"/><path d="M15.3 3.6 L17.5 1.5 Q19.2 0.3 20.8 1.6 Q22.2 3.1 21 4.6 L18.9 6.8 Z" fill="#000"/><path d="M8.4 6.3 L13.3 1.6 L16.9 1.6" fill="none" stroke="#000" stroke-width="1.6"/></svg>
<svg class="ic" style="left:243.3px;top:1224.33px" width="18" height="21"><path d="M1.2 1.5 L16.2 10.5 L1.2 19.5 Z" fill="none" stroke="#000" stroke-width="2.1" stroke-linejoin="miter"/></svg>
<div class="t" style="top:1220.81px;font-size:25.3px;line-height:30.36px;color:#000;left:274.50px;">Pruebas beta</div>
<div class="t" style="top:1220.81px;font-size:25.3px;line-height:30.36px;color:#000;right:1115.50px;text-align:right;">5 días</div>
<div class="t" style="top:1266.14px;font-size:25.3px;line-height:30.36px;color:#000;right:1803.20px;text-align:right;">21</div>
<svg class="ic" style="left:92px;top:1269.76px" width="22.08" height="23.00" viewBox="0 0 24 25"><path d="M0.3 16.2 V2 Q0.3 0.1 2.2 0.1 H10.3" fill="none" stroke="#000" stroke-width="1.3"/><path d="M6 21.7 H20.1 Q21.9 21.7 21.9 19.9 V7" fill="none" stroke="#000" stroke-width="1.3"/><path d="M4.1 14.5 L14.1 4.4 L17.7 7.8 L7.5 17.9 Z" fill="#000"/><path d="M-0.2 21.7 L2.8 15.9 L5.9 18.8 Z" fill="#000"/><path d="M15.3 3.6 L17.5 1.5 Q19.2 0.3 20.8 1.6 Q22.2 3.1 21 4.6 L18.9 6.8 Z" fill="#000"/><path d="M8.4 6.3 L13.3 1.6 L16.9 1.6" fill="none" stroke="#000" stroke-width="1.6"/></svg>
<svg class="ic" style="left:243.3px;top:1269.66px" width="18" height="21"><path d="M1.2 1.5 L16.2 10.5 L1.2 19.5 Z" fill="none" stroke="#000" stroke-width="2.1" stroke-linejoin="miter"/></svg>
<div class="t" style="top:1266.14px;font-size:25.3px;line-height:30.36px;color:#000;left:274.50px;">Pruebas de usabilidad</div>
<div class="t" style="top:1266.14px;font-size:25.3px;line-height:30.36px;color:#000;right:1115.50px;text-align:right;">1 día</div>
<div class="t" style="top:1311.48px;font-size:25.3px;line-height:30.36px;color:#000;right:1803.20px;text-align:right;">22</div>
<svg class="ic" style="left:92px;top:1315.09px" width="22.08" height="23.00" viewBox="0 0 24 25"><path d="M0.3 16.2 V2 Q0.3 0.1 2.2 0.1 H10.3" fill="none" stroke="#000" stroke-width="1.3"/><path d="M6 21.7 H20.1 Q21.9 21.7 21.9 19.9 V7" fill="none" stroke="#000" stroke-width="1.3"/><path d="M4.1 14.5 L14.1 4.4 L17.7 7.8 L7.5 17.9 Z" fill="#000"/><path d="M-0.2 21.7 L2.8 15.9 L5.9 18.8 Z" fill="#000"/><path d="M15.3 3.6 L17.5 1.5 Q19.2 0.3 20.8 1.6 Q22.2 3.1 21 4.6 L18.9 6.8 Z" fill="#000"/><path d="M8.4 6.3 L13.3 1.6 L16.9 1.6" fill="none" stroke="#000" stroke-width="1.6"/></svg>
<svg class="ic" style="left:243.3px;top:1314.99px" width="18" height="21"><path d="M1.2 1.5 L16.2 10.5 L1.2 19.5 Z" fill="none" stroke="#000" stroke-width="2.1" stroke-linejoin="miter"/></svg>
<div class="t" style="top:1311.48px;font-size:25.3px;line-height:30.36px;color:#000;left:274.50px;">Crear guía de estilo</div>
<div class="t" style="top:1311.48px;font-size:25.3px;line-height:30.36px;color:#000;right:1115.50px;text-align:right;">2 días</div>
<div class="t" style="top:1356.81px;font-size:25.3px;line-height:30.36px;color:#000;right:1803.20px;text-align:right;">23</div>
<svg class="ic" style="left:243.3px;top:1360.33px" width="18" height="21"><path d="M1.2 1.5 L16.2 10.5 L1.2 19.5 Z" fill="none" stroke="#000" stroke-width="2.1" stroke-linejoin="miter"/></svg>
<div class="t" style="top:1356.81px;font-size:25.3px;line-height:30.36px;color:#000;left:274.50px;">Pruebas de navegador</div>
<div class="t" style="top:1356.81px;font-size:25.3px;line-height:30.36px;color:#000;right:1115.50px;text-align:right;">2 días</div>
<div class="t" style="top:1402.14px;font-size:25.3px;line-height:30.36px;color:#000;right:1803.20px;text-align:right;">24</div>
<svg class="ic" style="left:92px;top:1405.76px" width="22.08" height="23.00" viewBox="0 0 24 25"><path d="M0.3 16.2 V2 Q0.3 0.1 2.2 0.1 H10.3" fill="none" stroke="#000" stroke-width="1.3"/><path d="M6 21.7 H20.1 Q21.9 21.7 21.9 19.9 V7" fill="none" stroke="#000" stroke-width="1.3"/><path d="M4.1 14.5 L14.1 4.4 L17.7 7.8 L7.5 17.9 Z" fill="#000"/><path d="M-0.2 21.7 L2.8 15.9 L5.9 18.8 Z" fill="#000"/><path d="M15.3 3.6 L17.5 1.5 Q19.2 0.3 20.8 1.6 Q22.2 3.1 21 4.6 L18.9 6.8 Z" fill="#000"/><path d="M8.4 6.3 L13.3 1.6 L16.9 1.6" fill="none" stroke="#000" stroke-width="1.6"/></svg>
<svg class="ic" style="left:243.3px;top:1405.66px" width="18" height="21"><path d="M1.2 1.5 L16.2 10.5 L1.2 19.5 Z" fill="none" stroke="#000" stroke-width="2.1" stroke-linejoin="miter"/></svg>
<div class="t" style="top:1402.14px;font-size:25.3px;line-height:30.36px;color:#000;left:274.50px;">Corregir fallos</div>
<div class="t" style="top:1402.14px;font-size:25.3px;line-height:30.36px;color:#000;right:1115.50px;text-align:right;">3 días</div>
<div class="abs" style="left:962.5px;top:1393.49px;width:183px;height:45.33px;overflow:hidden">
<div class="t" style="top:8.65px;font-size:25.3px;line-height:30.36px;color:#000;left:7.50px;">Programador</div>
</div>
<div class="abs" style="left:1146.5px;top:215.8px;width:721.5px;height:1201px;overflow:hidden">
<svg class="abs" style="left:0;top:0" width="722" height="1201" viewBox="1146.5 215.8 722 1201">
<path d="M1350.2 230.5665 Q1350.2 225.5665 1355.2 225.5665 H2000 V237.5665 H1370.9 L1360.7 247.8665 L1350.2 236.3665 Z" fill="#4195f5" stroke="#2e79d9" stroke-width="1"/>
<path d="M1585.2 321.2324999999999 Q1585.2 316.2324999999999 1590.2 316.2324999999999 H2000 V328.2324999999999 H1605.9 L1595.7 338.5324999999999 L1585.2 327.0324999999999 Z" fill="#4195f5" stroke="#2e79d9" stroke-width="1"/>
<path d="M1360.4 267.99949999999995 L1375.4 282.99949999999995 L1360.4 297.99949999999995 L1345.4 282.99949999999995 Z" fill="#4195f5" stroke="#2e79d9" stroke-width="1"/>
<path d="M1375 282.99949999999995 H1385.5" stroke="#000" stroke-width="1.3"/>
<rect x="1595.5" y="373.55" width="30.200000000000045" height="30.4" rx="6" fill="#4195f5" stroke="#2e79d9" stroke-width="1"/>
<rect x="1625.5" y="433.97" width="116.79999999999995" height="30.4" rx="6" fill="#4195f5" stroke="#2e79d9" stroke-width="1"/>
<rect x="1742.3" y="479.30" width="59.0" height="30.4" rx="6" fill="#4195f5" stroke="#2e79d9" stroke-width="1"/>
<rect x="1801.5" y="524.63" width="30.09999999999991" height="30.4" rx="6" fill="#4195f5" stroke="#2e79d9" stroke-width="1"/>
<path d="M1560.5 293.5 V318.5 Q1560.5 322.5 1564.5 322.5 H1579" fill="none" stroke="#000" stroke-width="1.15"/>
<path d="M1585 322.5 L1577.2 318.6 L1577.2 326.4 Z" fill="#000"/>
<path d="M1626 388.75 H1641.5 Q1645.5 388.75 1645.5 392.75 V427.50" fill="none" stroke="#000" stroke-width="1.15"/>
<path d="M1645.5 434.2989999999999 L1641.6 426.4989999999999 L1649.4 426.4989999999999 Z" fill="#000"/>
<path d="M1742.5 449.17 H1759 Q1763 449.17 1763 453.17 V473.33" fill="none" stroke="#000" stroke-width="1.15"/>
<path d="M1763 479.6319999999999 L1759.1 471.8319999999999 L1766.9 471.8319999999999 Z" fill="#000"/>
<path d="M1801.5 494.50 H1817 Q1821 494.50 1821 498.50 V513.16 Q1821 517.16 1817 517.16 H1780.6 Q1776.6 517.16 1776.6 521.16 V535.83 Q1776.6 539.83 1780.6 539.83 H1795" fill="none" stroke="#000" stroke-width="1.15"/>
<path d="M1801.5 539.8314999999998 L1793.7 535.9314999999998 L1793.7 543.7314999999998 Z" fill="#000"/>
<path d="M1831.6 539.83 H1841" stroke="#000" stroke-width="1.25"/>
<path d="M1813.5 653.36 L1827.3 660.66 L1813.5 667.96" fill="none" stroke="#2a66de" stroke-width="2.1"/>
<path d="M1826.5 653.36 L1840.3 660.66 L1826.5 667.96" fill="none" stroke="#2a66de" stroke-width="2.1"/>
<path d="M1813.5 698.70 L1827.3 706.00 L1813.5 713.30" fill="none" stroke="#2a66de" stroke-width="2.1"/>
<path d="M1826.5 698.70 L1840.3 706.00 L1826.5 713.30" fill="none" stroke="#2a66de" stroke-width="2.1"/>
<path d="M1813.5 744.03 L1827.3 751.33 L1813.5 758.63" fill="none" stroke="#2a66de" stroke-width="2.1"/>
<path d="M1826.5 744.03 L1840.3 751.33 L1826.5 758.63" fill="none" stroke="#2a66de" stroke-width="2.1"/>
<path d="M1813.5 789.36 L1827.3 796.66 L1813.5 803.96" fill="none" stroke="#2a66de" stroke-width="2.1"/>
<path d="M1826.5 789.36 L1840.3 796.66 L1826.5 803.96" fill="none" stroke="#2a66de" stroke-width="2.1"/>
<path d="M1813.5 834.70 L1827.3 842.00 L1813.5 849.30" fill="none" stroke="#2a66de" stroke-width="2.1"/>
<path d="M1826.5 834.70 L1840.3 842.00 L1826.5 849.30" fill="none" stroke="#2a66de" stroke-width="2.1"/>
<path d="M1813.5 880.03 L1827.3 887.33 L1813.5 894.63" fill="none" stroke="#2a66de" stroke-width="2.1"/>
<path d="M1826.5 880.03 L1840.3 887.33 L1826.5 894.63" fill="none" stroke="#2a66de" stroke-width="2.1"/>
<path d="M1813.5 925.36 L1827.3 932.66 L1813.5 939.96" fill="none" stroke="#2a66de" stroke-width="2.1"/>
<path d="M1826.5 925.36 L1840.3 932.66 L1826.5 939.96" fill="none" stroke="#2a66de" stroke-width="2.1"/>
<path d="M1813.5 970.70 L1827.3 978.00 L1813.5 985.30" fill="none" stroke="#2a66de" stroke-width="2.1"/>
<path d="M1826.5 970.70 L1840.3 978.00 L1826.5 985.30" fill="none" stroke="#2a66de" stroke-width="2.1"/>
<path d="M1813.5 1031.11 L1827.3 1038.41 L1813.5 1045.71" fill="none" stroke="#2a66de" stroke-width="2.1"/>
<path d="M1826.5 1031.11 L1840.3 1038.41 L1826.5 1045.71" fill="none" stroke="#2a66de" stroke-width="2.1"/>
<path d="M1813.5 1091.53 L1827.3 1098.83 L1813.5 1106.13" fill="none" stroke="#2a66de" stroke-width="2.1"/>
<path d="M1826.5 1091.53 L1840.3 1098.83 L1826.5 1106.13" fill="none" stroke="#2a66de" stroke-width="2.1"/>
<path d="M1813.5 1136.86 L1827.3 1144.16 L1813.5 1151.46" fill="none" stroke="#2a66de" stroke-width="2.1"/>
<path d="M1826.5 1136.86 L1840.3 1144.16 L1826.5 1151.46" fill="none" stroke="#2a66de" stroke-width="2.1"/>
<path d="M1813.5 1182.19 L1827.3 1189.49 L1813.5 1196.79" fill="none" stroke="#2a66de" stroke-width="2.1"/>
<path d="M1826.5 1182.19 L1840.3 1189.49 L1826.5 1196.79" fill="none" stroke="#2a66de" stroke-width="2.1"/>
<path d="M1813.5 1227.53 L1827.3 1234.83 L1813.5 1242.13" fill="none" stroke="#2a66de" stroke-width="2.1"/>
<path d="M1826.5 1227.53 L1840.3 1234.83 L1826.5 1242.13" fill="none" stroke="#2a66de" stroke-width="2.1"/>
<path d="M1813.5 1272.86 L1827.3 1280.16 L1813.5 1287.46" fill="none" stroke="#2a66de" stroke-width="2.1"/>
<path d="M1826.5 1272.86 L1840.3 1280.16 L1826.5 1287.46" fill="none" stroke="#2a66de" stroke-width="2.1"/>
<path d="M1813.5 1318.19 L1827.3 1325.49 L1813.5 1332.79" fill="none" stroke="#2a66de" stroke-width="2.1"/>
<path d="M1826.5 1318.19 L1840.3 1325.49 L1826.5 1332.79" fill="none" stroke="#2a66de" stroke-width="2.1"/>
<path d="M1813.5 1363.53 L1827.3 1370.83 L1813.5 1378.13" fill="none" stroke="#2a66de" stroke-width="2.1"/>
<path d="M1826.5 1363.53 L1840.3 1370.83 L1826.5 1378.13" fill="none" stroke="#2a66de" stroke-width="2.1"/>
<path d="M1813.5 1408.86 L1827.3 1416.16 L1813.5 1423.46" fill="none" stroke="#2a66de" stroke-width="2.1"/>
<path d="M1826.5 1408.86 L1840.3 1416.16 L1826.5 1423.46" fill="none" stroke="#2a66de" stroke-width="2.1"/>
</svg>
<div class="t" style="top:9.91px;font-size:21.5px;line-height:25.8px;right:532.50px;text-align:right">Nuevo sitio web</div>
<div class="t" style="top:55.25px;font-size:21.5px;line-height:25.8px;right:537.50px;text-align:right">Inicio del proyecto</div>
<div class="t" style="top:55.25px;font-size:21.5px;line-height:25.8px;left:244.00px">Cliente; Gestor de proyecto; Diseñador; Programador</div>
<div class="t" style="top:100.58px;font-size:21.5px;line-height:25.8px;right:322.00px;text-align:right">Preproducción</div>
<div class="t" style="top:160.99px;font-size:21.5px;line-height:25.8px;right:287.50px;text-align:right">Cuestionario para el cliente y objetivos</div>
<div class="t" style="top:160.99px;font-size:21.5px;line-height:25.8px;left:515.00px">Cliente; Gestor de proyecto</div>
<div class="t" style="top:221.41px;font-size:21.5px;line-height:25.8px;right:258.00px;text-align:right">Escenarios de uso</div>
<div class="t" style="top:221.41px;font-size:21.5px;line-height:25.8px;left:632.00px">Cliente; Director de producción</div>
<div class="t" style="top:266.74px;font-size:21.5px;line-height:25.8px;right:140.20px;text-align:right">Análisis comparativo</div>
<div class="t" style="top:266.74px;font-size:21.5px;line-height:25.8px;left:689.50px">Director de producción</div>
<div class="t" style="top:312.08px;font-size:21.5px;line-height:25.8px;right:105.50px;text-align:right">Especificaciones técnicas</div>
<div class="t" style="top:312.08px;font-size:21.5px;line-height:25.8px;left:700.00px">Programador; Diseñador</div>
<div class="t" style="top:373.29px;font-size:21.5px;line-height:25.8px;left:488.00px">Crear Propuesta de proyecto</div>
</div>
<div class="abs" style="left:888px;top:650px;width:332px;height:734px;border-radius:16px;background:linear-gradient(#dfe3ed 0px,#e0e4ee 100px,#e4e6ee 150px,#e4e6ee 100%);box-shadow:0 0 0 1px rgba(0,0,0,0.1),0 8px 26px rgba(0,0,0,0.17),0 2px 6px rgba(0,0,0,0.1)"></div>
<div class="abs" style="left:898px;top:966px;width:312px;height:39.5px;border-radius:8px;background:#6399f1"></div>
<svg class="abs" style="left:0;top:0" width="1880" height="1416">
<path d="M908 711.1 H1200" stroke="#c6c8ce" stroke-width="2"/>
<path d="M908 772.8 H1200" stroke="#c6c8ce" stroke-width="2"/>
<path d="M1186.5 798.2 L1193.5 805.0 L1186.5 811.8000000000001" fill="none" stroke="#1f1f1f" stroke-width="2.5" stroke-linecap="round" stroke-linejoin="round"/>
<path d="M1186.5 838.5 L1193.5 845.3 L1186.5 852.1" fill="none" stroke="#1f1f1f" stroke-width="2.5" stroke-linecap="round" stroke-linejoin="round"/>
<path d="M1186.5 878.7 L1193.5 885.5 L1186.5 892.3000000000001" fill="none" stroke="#1f1f1f" stroke-width="2.5" stroke-linecap="round" stroke-linejoin="round"/>
<path d="M908 915.0 H1200" stroke="#c6c8ce" stroke-width="2"/>
<path d="M908 1097.0 H1200" stroke="#c6c8ce" stroke-width="2"/>
<path d="M1186.5 1122.3 L1193.5 1129.1 L1186.5 1135.8999999999999" fill="none" stroke="#1f1f1f" stroke-width="2.5" stroke-linecap="round" stroke-linejoin="round"/>
<path d="M908 1159.3 H1200" stroke="#c6c8ce" stroke-width="2"/>
<path d="M908 1261.0 H1200" stroke="#c6c8ce" stroke-width="2"/>
<path d="M1186.5 1286.2 L1193.5 1293.0 L1186.5 1299.8" fill="none" stroke="#1f1f1f" stroke-width="2.5" stroke-linecap="round" stroke-linejoin="round"/>
<path d="M908 1323.2 H1200" stroke="#c6c8ce" stroke-width="2"/>
</svg>
<div class="t" style="top:667.85px;font-size:21.6px;line-height:25.92px;color:#262626;left:908.30px;letter-spacing:0.95px;">Edición</div>
<div class="t" style="top:729.55px;font-size:21.6px;line-height:25.92px;color:#262626;left:908.30px;letter-spacing:0.95px;">Mostrar visión general</div>
<div class="t" style="top:791.25px;font-size:21.6px;line-height:25.92px;color:#262626;left:908.30px;letter-spacing:0.95px;">Insertar</div>
<div class="t" style="top:831.55px;font-size:21.6px;line-height:25.92px;color:#262626;left:908.30px;letter-spacing:0.95px;">Asignaciones</div>
<div class="t" style="top:871.75px;font-size:21.6px;line-height:25.92px;color:#262626;left:908.30px;letter-spacing:0.95px;">Finalización</div>
<div class="t" style="top:933.55px;font-size:21.6px;line-height:25.92px;color:#262626;left:908.30px;letter-spacing:0.95px;">Cortar</div>
<div class="t" style="top:973.75px;font-size:21.6px;line-height:25.92px;color:#ffffff;left:908.30px;letter-spacing:0.95px;">Copiar</div>
<div class="t" style="top:1014.25px;font-size:21.6px;line-height:25.92px;color:#262626;left:908.30px;letter-spacing:0.95px;">Pegar</div>
<div class="t" style="top:1053.55px;font-size:21.6px;line-height:25.92px;color:#262626;left:908.30px;letter-spacing:0.95px;">Eliminar</div>
<div class="t" style="top:1115.35px;font-size:21.6px;line-height:25.92px;color:#262626;left:908.30px;letter-spacing:0.95px;">Vincular</div>
<div class="t" style="top:1177.35px;font-size:21.6px;line-height:25.92px;color:#262626;left:908.30px;letter-spacing:0.95px;">Copiar URL</div>
<div class="t" style="top:1216.95px;font-size:21.6px;line-height:25.92px;color:#262626;left:908.30px;letter-spacing:0.62px;">Guardar selección…</div>
<div class="t" style="top:1279.25px;font-size:21.6px;line-height:25.92px;color:#262626;left:908.30px;letter-spacing:0.95px;">Estilo y contenido</div>
<div class="t" style="top:1340.95px;font-size:21.6px;line-height:25.92px;color:#262626;left:908.30px;letter-spacing:0.95px;">Ocultar esquema</div>
<div class="abs" style="left:1101.5px;top:1384px;width:3px;height:1.6px;background:#111"></div>
</body></html>
